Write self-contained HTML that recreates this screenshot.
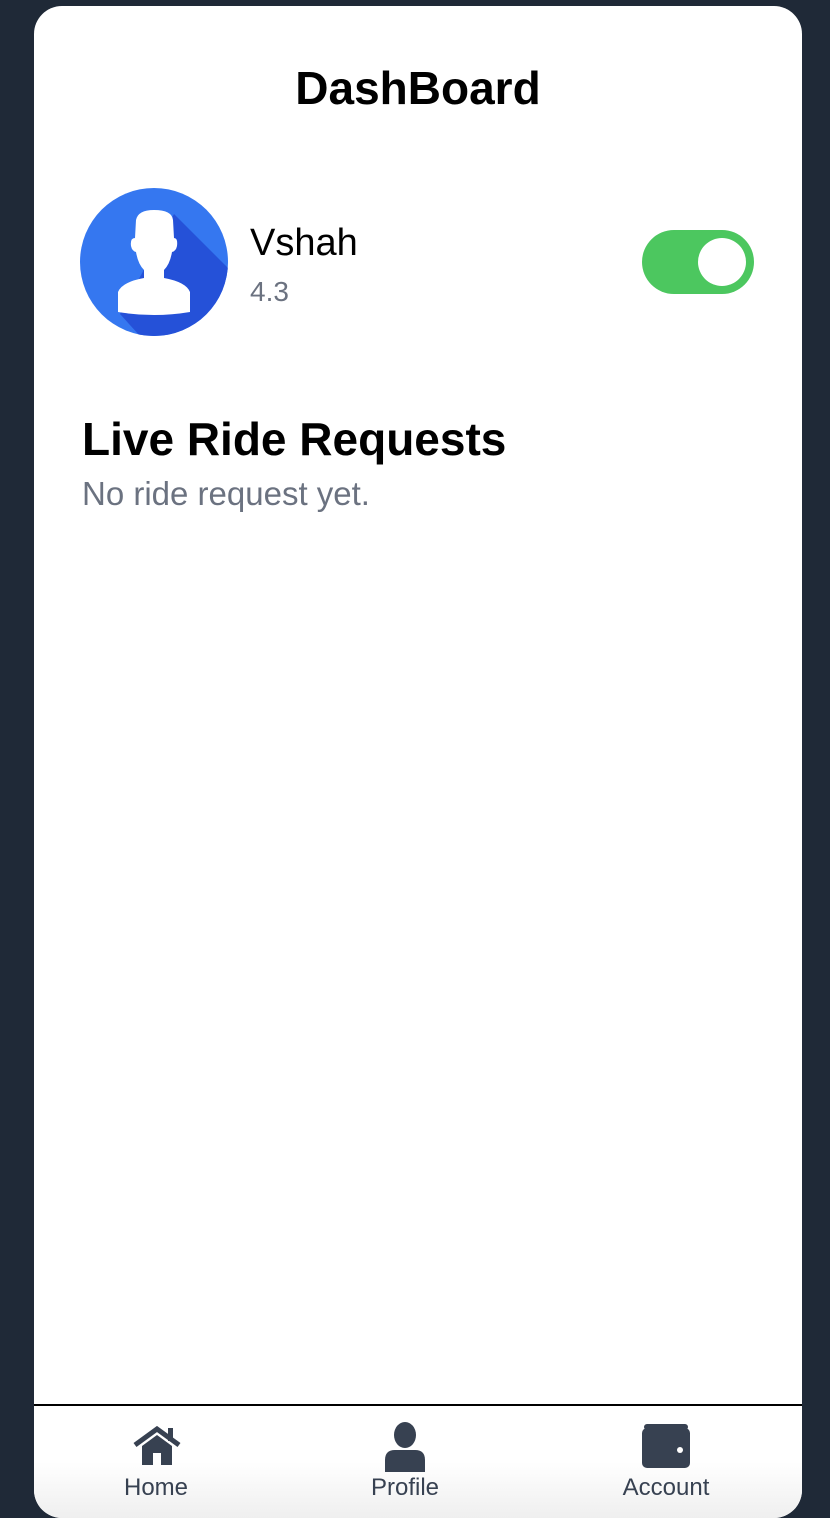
<!DOCTYPE html>
<html><head><meta charset="utf-8"><style>
*{margin:0;padding:0;box-sizing:border-box}
html,body{width:830px;height:1518px;overflow:hidden}
body{background:#1f2937;font-family:"Liberation Sans",sans-serif;position:relative}
.card{position:absolute;left:34px;top:6px;width:768px;height:1512px;background:#fff;border-radius:28px;overflow:hidden}
.t{position:absolute;white-space:nowrap}
.nav{position:absolute;left:0;top:1398px;width:768px;height:114px;border-top:2px solid #000;background:linear-gradient(#fff 50%,#efefef)}
.lab{position:absolute;top:68px;font-size:24px;color:#374151;transform:translateX(-50%)}
</style></head><body>
<div class="card">
<div class="t" style="left:0;width:768px;text-align:center;top:55px;font-size:46px;font-weight:bold;color:#000">DashBoard</div>
<svg style="position:absolute;left:46px;top:182px" width="148" height="148" viewBox="0 0 148 148">
<defs><clipPath id="c"><circle cx="74" cy="74" r="74"/></clipPath></defs>
<circle cx="74" cy="74" r="74" fill="#3577f0"/>
<g clip-path="url(#c)"><path d="M94 26 L170 102 L170 170 L80 170 L40 126 Z" fill="#2551d8"/></g>
<path d="M56 32 Q58 22 74 22 Q92 22 93 32 L94 50 Q98 50 97 58 Q96 63 92 64 Q90 76 84 82 L84 90 Q106 94 110 104 L110 124 Q74 130 38 124 L38 104 Q42 94 64 90 L64 82 Q58 76 56 64 Q52 63 51 58 Q50 50 55 50 Z" fill="#fff"/>
</svg>
<div class="t" style="left:216px;top:216px;font-size:38px;color:#000">Vshah</div>
<div class="t" style="left:216px;top:270px;font-size:28px;color:#6b7280">4.3</div>
<div style="position:absolute;left:608px;top:224px;width:112px;height:64px;border-radius:32px;background:#4cc75f"></div>
<div style="position:absolute;left:664px;top:232px;width:48px;height:48px;border-radius:50%;background:#fff"></div>
<div class="t" style="left:48px;top:406px;font-size:46px;font-weight:bold;color:#000">Live Ride Requests</div>
<div class="t" style="left:48px;top:469px;font-size:33px;color:#6b7280">No ride request yet.</div>
<div class="nav">
<svg style="position:absolute;left:98px;top:20px" width="50" height="40" viewBox="0 0 50 40"><path d="M3 19 L25 3 L47 19" stroke="#374151" stroke-width="5" fill="none"/><rect x="36" y="2" width="5" height="13" fill="#374151"/><path d="M10 20 L25 9 L40 20 L40 39 L29 39 L29 27 L21 27 L21 39 L10 39 Z" fill="#374151"/></svg>
<svg style="position:absolute;left:349px;top:16px" width="44" height="50" viewBox="0 0 44 50"><ellipse cx="22" cy="13" rx="11" ry="13" fill="#374151"/><path d="M2 50 L2 38 Q2 28 12 28 L32 28 Q42 28 42 38 L42 50 Z" fill="#374151"/></svg>
<svg style="position:absolute;left:607px;top:18px" width="50" height="44" viewBox="0 0 50 44"><rect x="1" y="4" width="48" height="40" rx="5" fill="#374151"/><rect x="3" y="0" width="44" height="6" rx="3" fill="#374151"/><circle cx="39" cy="26" r="3" fill="#fff"/></svg>
<div class="lab" style="left:122px">Home</div>
<div class="lab" style="left:371px">Profile</div>
<div class="lab" style="left:632px">Account</div>
</div>
</div>
</body></html>
